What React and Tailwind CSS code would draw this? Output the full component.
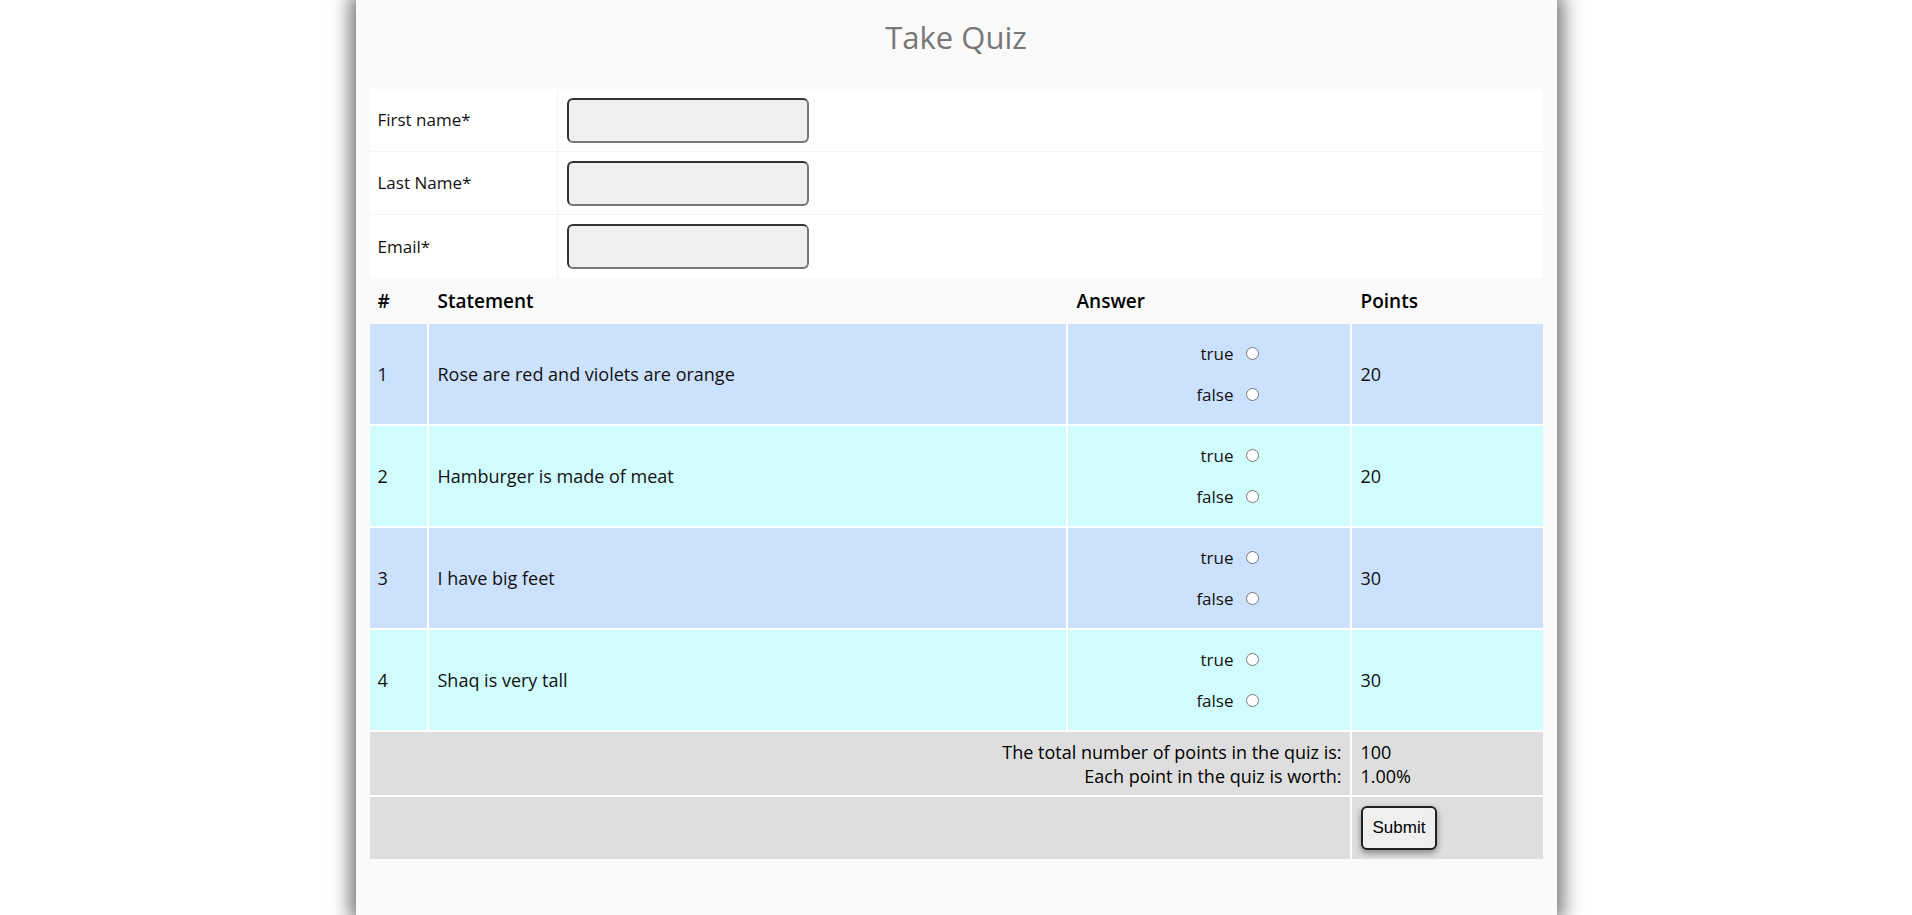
export default function App() {
  const rows = [
    ["1", "Rose are red and violets are orange", "20", "bg-[#cce1fd]"],
    ["2", "Hamburger is made of meat", "20", "bg-[#d1fcfd]"],
    ["3", "I have big feet", "30", "bg-[#cce1fd]"],
    ["4", "Shaq is very tall", "30", "bg-[#d1fcfd]"],
  ];
  const Radio = () => (
    <span className="inline-block w-[13px] h-[13px] rounded-full border border-[#777] bg-white ml-3"></span>
  );
  return (
    <div className="w-[1912px] h-[915px] bg-white flex justify-center overflow-hidden" style={{ fontFamily: '"Open Sans", sans-serif' }}>
      <div className="w-[1201px] h-[915px] bg-[#fafafa] shadow-[0_0_18px_6px_rgba(0,0,0,0.55)] px-[14px] flex flex-col">
        <h1 className="text-center text-[31px] text-[#777] h-[89px] pt-[14px]">Take Quiz</h1>
        <div className="bg-white text-[17px] text-[#111]">
          {["First name*", "Last Name*", "Email*"].map((l, i) => (
            <div key={l} className={"flex h-[63px] items-center " + (i < 2 ? "border-b border-[#f4f4f4]" : "")}>
              <div className="w-[188px] pl-[8px] h-full flex items-center border-r border-[#f4f4f4]">{l}</div>
              <div className="pl-[9px]"><div className="w-[242px] h-[45px] rounded-[6px] border-2 border-[#333] border-b-[#777] border-r-[#777] bg-[#efefef]"></div></div>
            </div>
          ))}
        </div>
        <div className="flex h-[46px] items-center font-semibold text-[19px] text-black">
          <div className="w-[59px] pl-[8px]">#</div>
          <div className="w-[639px] pl-[9px]">Statement</div>
          <div className="w-[284px] pl-[9px]">Answer</div>
          <div className="flex-1 pl-[9px]">Points</div>
        </div>
        {rows.map(([n, s, p, bg]) => (
          <div key={n} className={"flex h-[102px] items-stretch text-[18px] text-[#111] border-b-2 border-white " + bg}>
            <div className="w-[59px] pl-[8px] flex items-center border-r-2 border-white">{n}</div>
            <div className="w-[639px] pl-[9px] flex items-center border-r-2 border-white">{s}</div>
            <div className="w-[284px] flex flex-col items-center justify-center gap-[16px] border-r-2 border-white text-[17px] pl-[20px]">
              <div className="flex items-center w-[80px] justify-end"><span>true</span><Radio /></div>
              <div className="flex items-center w-[80px] justify-end"><span>false</span><Radio /></div>
            </div>
            <div className="flex-1 pl-[9px] flex items-center">{p}</div>
          </div>
        ))}
        <div className="flex h-[65px] bg-[#dedede] text-[18px] font-medium text-black border-b-2 border-white">
          <div className="w-[982px] border-r-2 border-white flex flex-col justify-center items-end pr-[8px] leading-[24px]">
            <div>The total number of points in the quiz is:</div>
            <div>Each point in the quiz is worth:</div>
          </div>
          <div className="flex-1 pl-[9px] flex flex-col justify-center leading-[24px]">
            <div>100</div>
            <div>1.00%</div>
          </div>
        </div>
        <div className="flex h-[62px] bg-[#dedede]">
          <div className="w-[982px] border-r-2 border-white"></div>
          <div className="flex-1 pl-[9px] flex items-center">
            <button className="h-[44px] px-[10px] rounded-[6px] border-2 border-[#222] bg-[#efefef] text-[17px] shadow-[0_3px_6px_rgba(0,0,0,0.4)]" style={{ fontFamily: '"Liberation Sans", Arial, sans-serif' }}>Submit</button>
          </div>
        </div>
      </div>
    </div>
  );
}
